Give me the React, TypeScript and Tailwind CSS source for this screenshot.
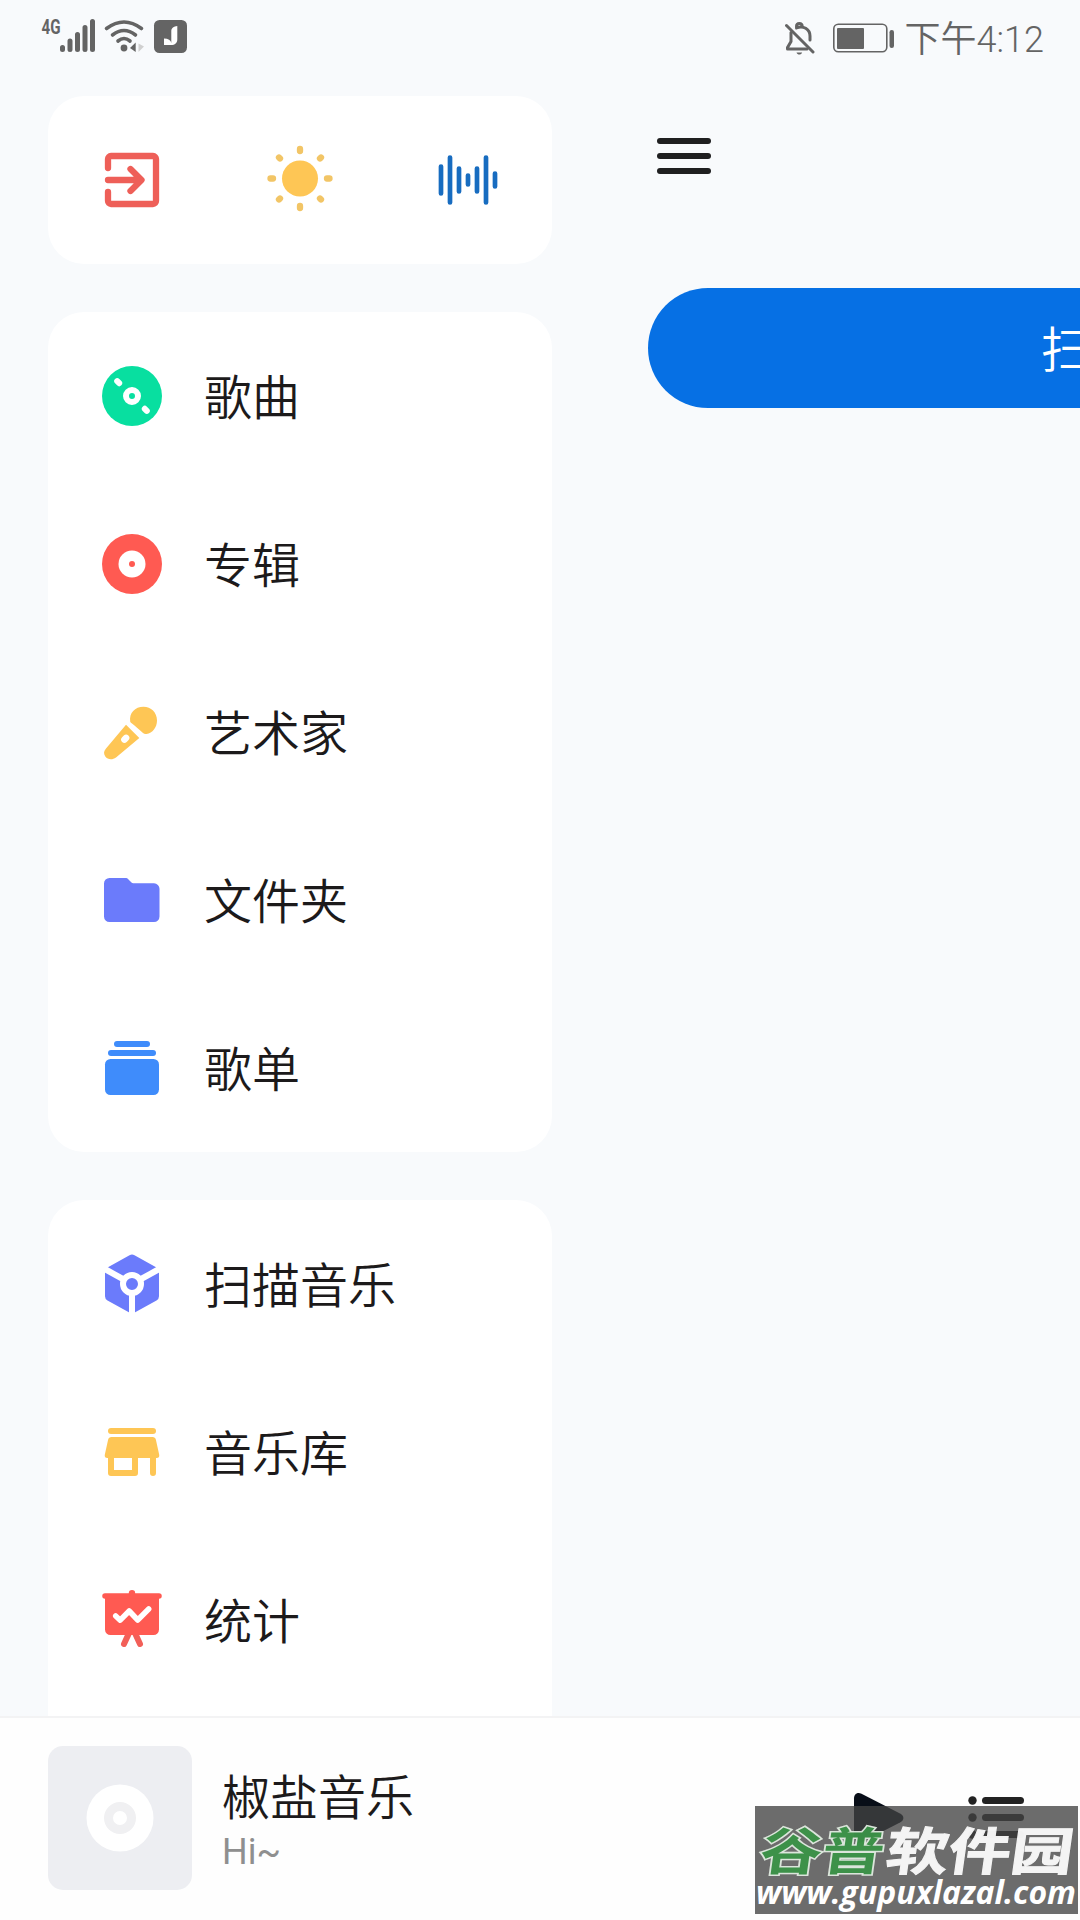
import React from 'react';

const RED = '#ff5a52';
const YELLOW = '#fec655';
const INDIGO = '#6b7bfb';

const Icon: React.FC<{ children: React.ReactNode }> = ({ children }) => (
  <svg width="60" height="60" viewBox="0 0 60 60" fill="none" strokeLinecap="round" strokeLinejoin="round" className="shrink-0 overflow-visible">
    {children}
  </svg>
);

const ExitIcon = () => (
  <Icon>
    <g stroke="#ee5f58" strokeWidth="6.300">
      <path d="M6 18V9a3 3 0 0 1 3-3h42a3 3 0 0 1 3 3v42a3 3 0 0 1-3 3H9a3 3 0 0 1-3-3v-9" />
      <path d="M6 30h33M28.500 19l11 11-11 11" />
    </g>
  </Icon>
);

const SunIcon = () => (
  <Icon>
    <circle cx="30" cy="28.500" r="18" fill={YELLOW} />
    <path
      d="M30-1v2M30 56v2M.5 28.500h2.500M57 28.500h2.500M9 7.500l1 1M50 48.500l1 1M9 49.500l1-1M50 8.500l1-1"
      stroke="#f2c566"
      strokeWidth="6.300"
    />
  </Icon>
);

const WaveIcon = () => (
  <Icon>
    <path
      d="M3 16.500v27M12 7.500v45M21 18.500v23M30 25.500v9M39 18.500v23M48 7.500v45M57 23.500v13"
      stroke="#176cc0"
      strokeWidth="4.700"
    />
  </Icon>
);

const SongIcon = () => (
  <Icon>
    <circle cx="30" cy="30" r="30" fill="#08dfa0" />
    <circle cx="30" cy="30" r="6" stroke="#fff" strokeWidth="6" />
    <path d="M15.200 15.200l2 2M42.800 42.800l2 2" stroke="#fff" strokeWidth="6" />
  </Icon>
);

const AlbumIcon = () => (
  <Icon>
    <circle cx="30" cy="30" r="30" fill={RED} />
    <circle cx="30" cy="30" r="13.500" fill="#fff" />
    <circle cx="30" cy="30" r="3" fill={RED} />
  </Icon>
);

const ArtistIcon = () => (
  <Icon>
    <path
      d="M28.200 19.500C27 11 33 4.800 41.500 4.800 49 4.800 55 10.500 55 18.500c0 7-4.500 12.500-10.500 13.500-1.500.2-2.500-.1-3.500-1-3.500-3.500-8-7-11-9.500-1-.7-1.600-1-1.800-2z"
      fill={YELLOW}
    />
    <path d="M24 22.700L37.300 36 14 55.500c-4 3-8.500 2-10.700-1-2-3-1.500-5.500.7-8z" fill={YELLOW} />
    <path d="M22.400 37.600l1.700-1.700" stroke="#fff" strokeWidth="6.500" />
  </Icon>
);

const FolderIcon = () => (
  <Icon>
    <path
      d="M7.500 8h15.800c1.300 0 2.300.5 3.200 1.400l3 3.200c.5.500 1 .7 1.700.7H52a5.500 5.500 0 0 1 5.500 5.500V46.500A5.500 5.500 0 0 1 52 52H7.500A5.500 5.500 0 0 1 2 46.500v-33A5.500 5.500 0 0 1 7.500 8z"
      fill={INDIGO}
    />
  </Icon>
);

const PlaylistIcon = () => (
  <Icon>
    <g fill="#3f8cfb">
      <rect x="12" y="3" width="36" height="6" rx="3" />
      <rect x="6" y="12" width="48" height="6" rx="3" />
      <rect x="3" y="21" width="54" height="36" rx="5.500" />
    </g>
  </Icon>
);

const ScanIcon = () => (
  <Icon>
    <path
      d="M27.500 1.200a5 5 0 0 1 5 0L54.500 13.500a5 5 0 0 1 2.500 4.300v24.400a5 5 0 0 1-2.500 4.300L30 60 5.500 46.500A5 5 0 0 1 3 42.200V17.800a5 5 0 0 1 2.500-4.300z"
      fill={INDIGO}
    />
    <path d="M30 30L1 14M30 30l29-16M30 30v31" stroke="#fff" strokeWidth="6" />
    <circle cx="30" cy="30" r="9" stroke="#fff" strokeWidth="6" fill={INDIGO} />
  </Icon>
);

const LibraryIcon = () => (
  <Icon>
    <rect x="6" y="6" width="48" height="6" rx="3" fill={YELLOW} />
    <path
      d="M9.500 15h41a3.500 3.500 0 0 1 3.400 2.700l3.300 15c.4 2-.6 3.300-2.500 3.300H54v15a3 3 0 0 1-6 0V36H36v15a3 3 0 0 1-3 3H9a3 3 0 0 1-3-3V36h-.7c-1.900 0-2.900-1.300-2.500-3.300l3.300-15A3.500 3.500 0 0 1 9.500 15z"
      fill={YELLOW}
    />
    <rect x="12" y="36" width="18" height="12" fill="#fff" />
  </Icon>
);

const StatsIcon = () => (
  <Icon>
    <path d="M27.500 42L22 54M32.500 42L38 54" stroke="#f25f58" strokeWidth="6" />
    <path d="M3 6h54v33.500a5.500 5.500 0 0 1-5.500 5.500h-43A5.500 5.500 0 0 1 3 39.500z" fill={RED} />
    <path d="M3 6h54" stroke={RED} strokeWidth="5.500" />
    <circle cx="30" cy="3.200" r="3.200" fill={RED} />
    <path d="M13.700 26l4.500 4.200 9-9.200 8.500 9 11-11" stroke="#fff" strokeWidth="5.500" />
  </Icon>
);

const browseItems = [
  { label: '歌曲', icon: <SongIcon /> },
  { label: '专辑', icon: <AlbumIcon /> },
  { label: '艺术家', icon: <ArtistIcon /> },
  { label: '文件夹', icon: <FolderIcon /> },
  { label: '歌单', icon: <PlaylistIcon /> },
];

const toolItems = [
  { label: '扫描音乐', icon: <ScanIcon /> },
  { label: '音乐库', icon: <LibraryIcon /> },
  { label: '统计', icon: <StatsIcon /> },
];

const MenuRow: React.FC<{ label: string; icon: React.ReactNode }> = ({ label, icon }) => (
  <li className="flex h-42 items-center gap-[42px] pl-[54px]">
    {icon}
    <span className="pt-1.5 text-5xl leading-none font-[350] text-[#1c1a1b]">{label}</span>
  </li>
);

const StatusBar = () => (
  <header className="flex h-24 shrink-0 items-start justify-between pt-[6px] pr-9 pl-10 text-[#646464]">
    <svg width="150" height="50" viewBox="40 6 150 50" fill="none" strokeLinecap="round">
      <text x="41.500" y="34" fontSize="20" fontWeight="700" fill="#646464" textLength="19" lengthAdjust="spacingAndGlyphs">4G</text>
      <path d="M62.500 47.500v2M70 41v8.500M77.500 34.500v15M85 27.500v22M92.500 21.500v28" stroke="#646464" strokeWidth="5" />
      <path d="M106.500 28.500q17.500-13 35 0M112.500 35q11.500-9 23 0M118 41q6-5 12 0" stroke="#646464" strokeWidth="3.600" />
      <circle cx="124" cy="48" r="3.400" fill="#646464" />
      <path d="M130 48l5.700-5.500v9.500z" fill="#646464" />
      <path d="M138.500 43.500l5.500 3-5.500 5.500z" fill="#d0d0d0" />
      <rect x="154" y="20" width="33" height="33" rx="5.500" fill="#646464" />
      <path d="M177.300 26c-3.500.5-6 2-6 5v12c-.5-3-3-4.500-7.300-4.500V45h7c4 0 6.300-2 6.300-5.500z" fill="#fff" />
    </svg>
    <div className="flex items-center pt-3">
      <svg width="30" height="36" viewBox="0 0 30 36" fill="none" stroke="#646464" strokeWidth="3" strokeLinecap="round" strokeLinejoin="round">
        <path d="M6 12.500v9L2.500 27.500v1.500H22M11.500 8C18 5 25 9 25 16v4" />
        <path d="M11.500 6.500c0-4 5.700-4 5.700 0" />
        <path d="M1.500 5.500L28 32" />
        <path d="M11.500 32.500h5.600c-1 2.700-4.600 2.700-5.600 0z" fill="#646464" stroke="none" />
      </svg>
      <svg width="64" height="32" viewBox="0 0 64 32" className="ml-[18px]">
        <rect x=".8" y="2.300" width="53" height="27.500" rx="4.500" fill="none" stroke="#646464" strokeWidth="1.600" />
        <rect x="4" y="6" width="27" height="21" rx="1" fill="#646464" />
        <rect x="56.500" y="8" width="4.500" height="18" rx="2.200" fill="#646464" />
      </svg>
      <span className="mt-1 ml-2 text-4xl leading-9 font-[350] whitespace-nowrap">下午4:12</span>
    </div>
  </header>
);

const Drawer = () => (
  <aside className="flex w-[504px] shrink-0 flex-col gap-12">
    <div className="flex h-42 shrink-0 items-center justify-between rounded-[36px] bg-white px-[54px]">
      <ExitIcon />
      <SunIcon />
      <WaveIcon />
    </div>
    <ul className="shrink-0 rounded-[36px] bg-white">
      {browseItems.map((item) => (
        <MenuRow key={item.label} {...item} />
      ))}
    </ul>
    <ul className="h-[600px] shrink-0 rounded-t-[36px] bg-white">
      {toolItems.map((item) => (
        <MenuRow key={item.label} {...item} />
      ))}
    </ul>
  </aside>
);

const Page = () => (
  <section className="flex w-[984px] shrink-0 flex-col pt-[42px]">
    <button className="ml-[9px] flex w-[54px] flex-col gap-[9px]">
      <span className="h-1.5 w-full rounded-full bg-[#1f1f20]" />
      <span className="h-1.5 w-full rounded-full bg-[#1f1f20]" />
      <span className="h-1.5 w-full rounded-full bg-[#1f1f20]" />
    </button>
    <button className="mt-[114px] flex h-30 items-center rounded-full bg-[#0670e4] pt-1.5 pl-[393px] text-5xl leading-none font-[350] text-white">
      扫
    </button>
  </section>
);

const Watermark = () => (
  <svg width="324" height="108" viewBox="0 0 324 108" className="absolute right-[1px] bottom-1.5">
    <rect width="323" height="108" fill="#424242" fillOpacity=".78" />
    <g transform="translate(0 63.500) skewX(-8)" fontSize="51" fontWeight="700" opacity=".93">
      <text x="3" textLength="124" lengthAdjust="spacingAndGlyphs" fill="#3a9447" stroke="#e4efe4" strokeWidth="3" paintOrder="stroke">谷普</text>
      <text x="129" textLength="187" lengthAdjust="spacingAndGlyphs" fill="#fff" stroke="#fff" strokeWidth="1">软件园</text>
    </g>
    <text x="1" y="98" textLength="320" lengthAdjust="spacingAndGlyphs" fontSize="32" fontWeight="700" fontStyle="italic" fill="#fff" className="font-['Open_Sans']">
      www.gupuxlazal.com
    </text>
  </svg>
);

const Player = () => (
  <footer className="relative flex h-51 shrink-0 items-center border-t-2 border-[#f3f3f4] bg-[#fefefe] pr-[54px] pb-0.5 pl-12">
    <svg width="144" height="144" viewBox="0 0 144 144">
      <rect width="144" height="144" rx="15" fill="#edeef2" />
      <circle cx="72" cy="72" r="33.500" fill="#fff" />
      <circle cx="72" cy="72" r="11.500" fill="none" stroke="#f0f0f2" strokeWidth="9" />
    </svg>
    <div className="ml-[30px] flex flex-1 flex-col pt-2">
      <span className="text-5xl leading-[60px] font-[350] text-[#1c1a1b]">椒盐音乐</span>
      <span className="text-4xl leading-[46px] text-[#8f8f8f]">Hi~</span>
    </div>
    <svg width="52" height="54" viewBox="0 0 52 54" className="mr-[63px]">
      <path d="M1 7.500C1 3 4.500.8 8.500 2.800L47 22.500c4.500 2.400 4.500 6.600 0 9L8.500 51.200C4.500 53.200 1 51 1 46.500z" fill="#080e18" />
    </svg>
    <svg width="58" height="54" viewBox="0 0 58 54" fill="#222">
      <circle cx="4.500" cy="9.500" r="4.200" />
      <rect x="14" y="6" width="42" height="7" rx="3.500" />
      <circle cx="4.500" cy="26.500" r="4.200" />
      <rect x="14" y="23" width="42" height="7" rx="3.500" />
      <circle cx="4.500" cy="43.500" r="4.200" />
      <rect x="14" y="40" width="42" height="7" rx="3.500" />
    </svg>
    <Watermark />
  </footer>
);

const App: React.FC = () => {
  return (
    <div className="flex h-[1920px] w-[1080px] flex-col overflow-hidden bg-[#f8fafc] font-[Roboto,'Noto_Sans_CJK_SC',sans-serif]">
      <StatusBar />
      <main className="flex h-[1620px] shrink-0 gap-24 overflow-hidden pl-12">
        <Drawer />
        <Page />
      </main>
      <Player />
    </div>
  );
};

export default App;
